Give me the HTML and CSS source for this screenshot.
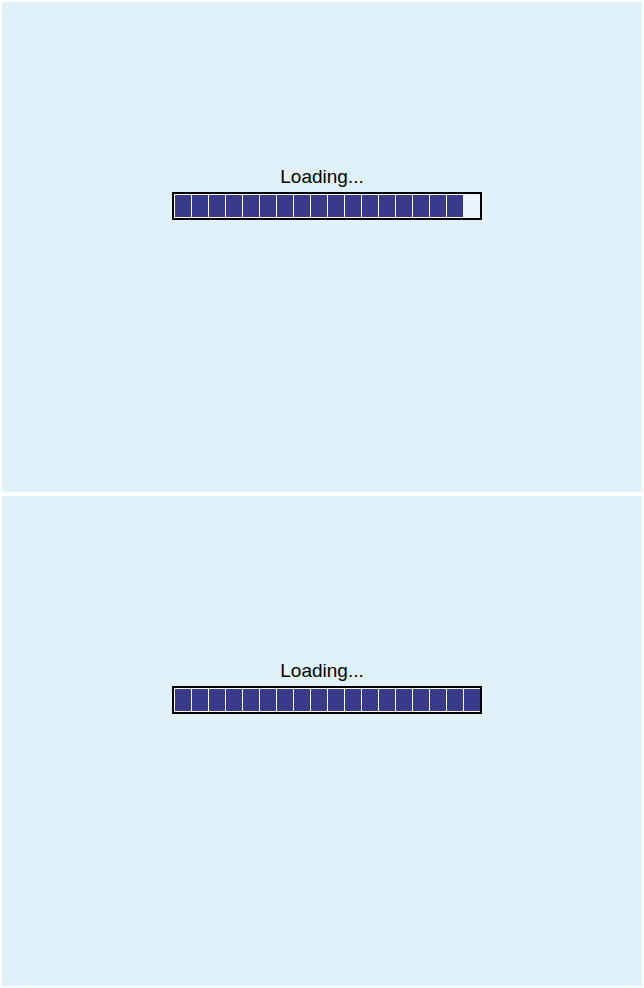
FILE: index.html
```html
<!DOCTYPE html>
<html>
<head>
<meta charset="utf-8">
<link rel="stylesheet" href="styles.css">
</head>
<body>
<div class="screen">
  <section class="panel">
    <div class="label">Loading...</div>
    <div class="track">
      <div class="bar">
        <span class="cell"></span><span class="cell"></span><span class="cell"></span><span class="cell"></span><span class="cell"></span><span class="cell"></span>
        <span class="cell"></span><span class="cell"></span><span class="cell"></span><span class="cell"></span><span class="cell"></span><span class="cell"></span>
        <span class="cell"></span><span class="cell"></span><span class="cell"></span><span class="cell"></span><span class="cell"></span><span class="cell empty"></span>
      </div>
    </div>
  </section>
  <section class="panel">
    <div class="label">Loading...</div>
    <div class="track">
      <div class="bar">
        <span class="cell"></span><span class="cell"></span><span class="cell"></span><span class="cell"></span><span class="cell"></span><span class="cell"></span>
        <span class="cell"></span><span class="cell"></span><span class="cell"></span><span class="cell"></span><span class="cell"></span><span class="cell"></span>
        <span class="cell"></span><span class="cell"></span><span class="cell"></span><span class="cell"></span><span class="cell"></span><span class="cell"></span>
      </div>
    </div>
  </section>
</div>
</body>
</html>
```

FILE: styles.css
```css
html, body {
  margin: 0;
  padding: 0;
  background: #ffffff;
}

.screen {
  display: flex;
  flex-direction: column;
  gap: 4px;
  padding: 2px;
  width: 640px;
}

.panel {
  height: 490px;
  background: #e1f1fa;
  box-sizing: border-box;
  padding-top: 164px;
  display: flex;
  flex-direction: column;
  align-items: center;
}

.label {
  font-family: "Liberation Sans", Arial, sans-serif;
  font-size: 19px;
  line-height: 22px;
  color: #000000;
  text-align: center;
}

.track {
  width: 300px;
  margin-top: 4px;
}

.bar {
  width: 310px;
  height: 28px;
  box-sizing: border-box;
  border: 2px solid #000000;
  background: #ffffff;
  padding: 1px 0 1px 1px;
  display: flex;
  gap: 1px;
}

.cell {
  flex: 0 0 16px;
  height: 22px;
  background: #3a3a8a;
}

.cell.empty {
  background: #eaf5fb;
  flex: 0 0 17px;
  height: 24px;
  margin: -1px 0 -1px -1px;
}
```
